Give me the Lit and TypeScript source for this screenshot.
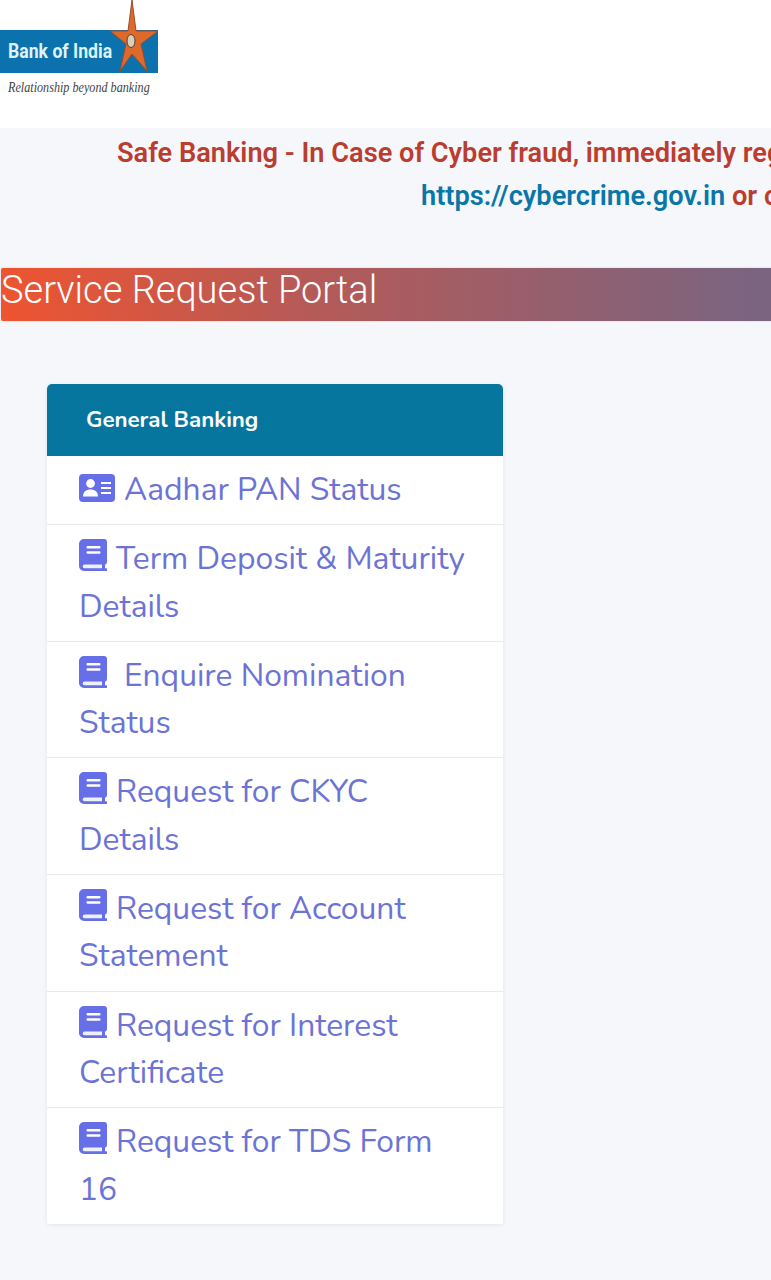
import { LitElement, html, css } from "lit";
import { customElement } from "lit/decorators.js";

const book = html`<svg class="ic book" viewBox="0 0 28 32"><path fill="#666ee8" d="M5 0h20a3 3 0 0 1 3 3v20a3 3 0 0 1-2 2.8v3.4h1a1.4 1.4 0 0 1 0 2.8H5a5 5 0 0 1-5-5V5a5 5 0 0 1 5-5z"/><path fill="#eef0fc" d="M5.500 25.600a1.800 1.800 0 0 0 0 3.600H23v-3.600z"/><rect x="7.500" y="7" width="14" height="2.600" rx="1" fill="#fff"/><rect x="7.500" y="12.200" width="14" height="2.600" rx="1" fill="#fff"/></svg>`;

const card = html`<svg class="ic card" viewBox="0 0 36 28"><rect width="36" height="28" rx="4" fill="#666ee8"/><circle cx="11.500" cy="9.500" r="4.400" fill="#fff"/><path fill="#fff" d="M4 22.500c0-4.500 3-7 7.500-7s7.500 2.500 7.500 7z"/><rect x="22" y="8" width="10" height="2" fill="#fff"/><rect x="22" y="13" width="10" height="2" fill="#fff"/><rect x="22" y="18" width="10" height="2" fill="#fff"/></svg>`;

const rows = [
  ["Term Deposit & Maturity Details", false],
  ["Enquire Nomination Status", true],
  ["Request for CKYC Details", false],
  ["Request for Account Statement", false],
  ["Request for Interest Certificate", false],
  ["Request for TDS Form 16", false],
] as const;

@customElement("app-root")
export class AppRoot extends LitElement {
  static styles = css`
    :host { display: block; width: 771px; height: 1280px; overflow: hidden; background: #f5f7fb; font-family: "Nunito", "Lato", sans-serif; }
    .top { height: 128px; background: #fff; display: flex; align-items: flex-start; }
    .logo { width: 160px; display: flex; flex-direction: column; }
    .star-wrap { position: relative; height: 73px; display: flex; align-items: flex-end; }
    .bar { width: 158px; height: 43px; background: #0b72ad; display: flex; align-items: center; padding-left: 8px; box-sizing: border-box; margin-top: 30px; }
    .bar span { font: 700 21px/1 "Roboto", sans-serif; color: #dff3f7; transform: scaleX(.84); transform-origin: left; white-space: nowrap; }
    .star { position: absolute; left: 108px; top: 0; width: 52px; height: 73px; }
    .tag { font: italic 15px/1 "Liberation Serif", serif; color: #444; margin: 7px 0 0 8px; white-space: nowrap; transform: scaleX(.81); transform-origin: left; }
    .alert { font: 600 27.2px/24px "Roboto", sans-serif; white-space: nowrap; color: #bb3d30; }
    .l1 { margin: 13px 0 0 117px; }
    .l2 { margin: 19px 0 0 421px; }
    .l2 a { color: #0a76a8; text-decoration: none; }
    .banner { margin: 60px -10px 0 1px; height: 53px; box-sizing: border-box; border-radius: 2px; background: linear-gradient(90deg, #ee5430 0%, #b55a58 40%, #7a6480 97%); color: #fff; font: 300 38px/44px "Roboto", sans-serif; box-shadow: 0 0 2px rgba(0,0,0,.2); white-space: nowrap; }
    .panel { margin: 63px 0 0 47px; width: 456px; background: #fff; border-radius: 5px 5px 2px 2px; box-shadow: 0 1px 4px rgba(0,0,0,.08); overflow: hidden; }
    .head { height: 72px; background: #07769f; color: #fff; font: 700 22.3px/72px "Nunito", "Lato", sans-serif; padding-left: 39px; }
    .row { padding: 10px 32px 10.8px; font: 400 31.8px/47.4px "Nunito", "Lato", sans-serif; color: #6c73d6; border-bottom: 1px solid #e8e9ee; }
    .row:last-child { border-bottom: 0; }
    .ic { vertical-align: -2px; }
    .card { width: 36px; height: 28px; margin-right: 9px; }
    .book { width: 28px; height: 32px; margin-right: 9px; vertical-align: -2px; }
    .gap { margin-right: 8px; }
  `;
  render() {
    return html`
      <div class="top">
        <div class="logo">
          <div class="star-wrap">
            <div class="bar"><span>Bank of India</span></div>
            <svg class="star" viewBox="0 0 52 73">
              <path fill="#dd6a2a" stroke="#9c4a2a" stroke-width="1" d="M24 0l4 31 22 0-17 13 6 27-15-17-12 17 6-27L2 31l18 0z"/>
              <ellipse cx="23" cy="41" rx="4" ry="6.500" fill="#d8d0b8" stroke="#5a3a30"/>
            </svg>
          </div>
          <div class="tag">Relationship beyond banking</div>
        </div>
      </div>
      <div class="alert l1">Safe Banking - In Case of Cyber fraud, immediately register complaint on</div>
      <div class="alert l2"><a>https://cybercrime.gov.in</a> or call 1930</div>
      <div class="banner">Service Request Portal</div>
      <div class="panel">
        <div class="head">General Banking</div>
        <div class="row">${card}Aadhar PAN Status</div>
        ${rows.map(([t, wide]) => html`<div class="row"><span class=${wide ? "gap" : ""}>${book}</span>${t}</div>`)}
      </div>
    `;
  }
}
